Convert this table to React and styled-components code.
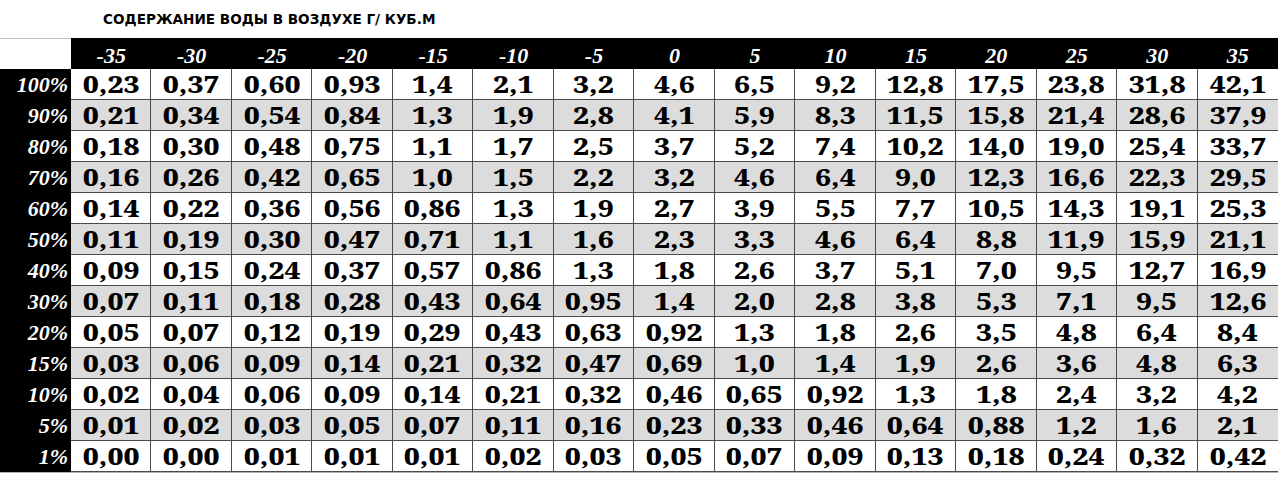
import React from 'react'
import styled, { createGlobalStyle } from 'styled-components'

const GlobalStyle = createGlobalStyle`
  html, body {
    margin: 0;
    padding: 0;
    background: #fff;
  }
  * {
    box-sizing: border-box;
  }
`

const temps = ['-35', '-30', '-25', '-20', '-15', '-10', '-5', '0', '5', '10', '15', '20', '25', '30', '35']

const rows = [
  ['100%', '0,23 0,37 0,60 0,93 1,4 2,1 3,2 4,6 6,5 9,2 12,8 17,5 23,8 31,8 42,1'],
  ['90%', '0,21 0,34 0,54 0,84 1,3 1,9 2,8 4,1 5,9 8,3 11,5 15,8 21,4 28,6 37,9'],
  ['80%', '0,18 0,30 0,48 0,75 1,1 1,7 2,5 3,7 5,2 7,4 10,2 14,0 19,0 25,4 33,7'],
  ['70%', '0,16 0,26 0,42 0,65 1,0 1,5 2,2 3,2 4,6 6,4 9,0 12,3 16,6 22,3 29,5'],
  ['60%', '0,14 0,22 0,36 0,56 0,86 1,3 1,9 2,7 3,9 5,5 7,7 10,5 14,3 19,1 25,3'],
  ['50%', '0,11 0,19 0,30 0,47 0,71 1,1 1,6 2,3 3,3 4,6 6,4 8,8 11,9 15,9 21,1'],
  ['40%', '0,09 0,15 0,24 0,37 0,57 0,86 1,3 1,8 2,6 3,7 5,1 7,0 9,5 12,7 16,9'],
  ['30%', '0,07 0,11 0,18 0,28 0,43 0,64 0,95 1,4 2,0 2,8 3,8 5,3 7,1 9,5 12,6'],
  ['20%', '0,05 0,07 0,12 0,19 0,29 0,43 0,63 0,92 1,3 1,8 2,6 3,5 4,8 6,4 8,4'],
  ['15%', '0,03 0,06 0,09 0,14 0,21 0,32 0,47 0,69 1,0 1,4 1,9 2,6 3,6 4,8 6,3'],
  ['10%', '0,02 0,04 0,06 0,09 0,14 0,21 0,32 0,46 0,65 0,92 1,3 1,8 2,4 3,2 4,2'],
  ['5%', '0,01 0,02 0,03 0,05 0,07 0,11 0,16 0,23 0,33 0,46 0,64 0,88 1,2 1,6 2,1'],
  ['1%', '0,00 0,00 0,01 0,01 0,01 0,02 0,03 0,05 0,07 0,09 0,13 0,18 0,24 0,32 0,42'],
]

export default function App() {
  return (
    <Page>
      <GlobalStyle />
      <Title>СОДЕРЖАНИЕ ВОДЫ В ВОЗДУХЕ Г/ КУБ.М</Title>

      <Grid>
        <Corner />
        {temps.map(t => <HeadCell key={t}>{t}</HeadCell>)}

        {rows.map(([label, values], index) => (
          <React.Fragment key={label}>
            <RowLabel>{label}</RowLabel>
            {values.split(' ').map((v, i) => (
              <ValueCell key={i} $shaded={index % 2 === 1}>
                <Value>{v}</Value>
              </ValueCell>
            ))}
          </React.Fragment>
        ))}
      </Grid>
      <BottomLine />
    </Page>
  )
}

const Page = styled.div`
  width: 1278px;
  height: 478px;
  overflow: hidden;
  background: #fff;
`

const Title = styled.div`
  height: 38px;
  display: flex;
  align-items: center;
  padding-left: 103px;
  font-family: 'DejaVu Sans', Verdana, sans-serif;
  font-weight: bold;
  font-size: 13.6px;
  color: #000;
`

const Grid = styled.div`
  display: grid;
  grid-template-columns: 71px repeat(15, 1fr);
  grid-auto-rows: 31px;
`

const Corner = styled.div`
  background: #fff;
  border-top: 1px solid #c4c4c4;
`

const HeadCell = styled.div`
  background: #000;
  color: #fff;
  display: flex;
  align-items: center;
  justify-content: center;
  padding-top: 5px;
  font-family: 'Liberation Serif', 'Times New Roman', serif;
  font-style: italic;
  font-weight: bold;
  font-size: 22px;
`

const RowLabel = styled.div`
  background: #000;
  color: #fff;
  display: flex;
  align-items: center;
  justify-content: flex-end;
  padding-right: 3px;
  font-family: 'Liberation Serif', 'Times New Roman', serif;
  font-style: italic;
  font-weight: bold;
  font-size: 22px;
`

const ValueCell = styled.div`
  background: ${p => (p.$shaded ? '#dcdcdc' : '#fff')};
  border-right: 1px solid #4a4a4a;
  border-bottom: 1px solid #4a4a4a;
  display: flex;
  align-items: center;
  justify-content: center;
  color: #000;
  &:nth-child(16n) {
    border-right: none;
  }
`

const Value = styled.span`
  display: inline-block;
  font-family: 'Noto Serif', 'Liberation Serif', serif;
  font-weight: 800;
  font-size: 24px;
  line-height: 1;
  transform: scaleX(1.18);
`

const BottomLine = styled.div`
  height: 1px;
  background: #b0b0b0;
`
